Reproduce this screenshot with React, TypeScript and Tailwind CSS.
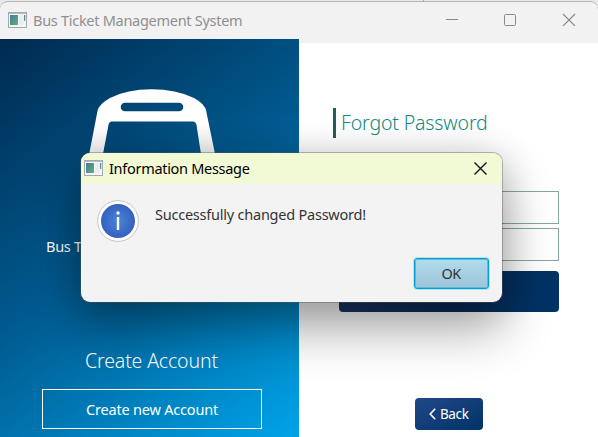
import React from "react";

function AppIcon() {
  return (
    <svg className="block h-[16px] w-[19px] shrink-0" viewBox="0 0 19 16">
      <defs>
        <linearGradient id="pane" x1="0" y1="0" x2="1" y2="1">
          <stop offset="0" stopColor="#4577a0" />
          <stop offset="1" stopColor="#5fb573" />
        </linearGradient>
      </defs>
      <rect x="0.5" y="0.5" width="18" height="15" fill="#f7f7f8" stroke="#a5a8b0" />
      <path d="M1 1.5H18" stroke="#b9bcc6" />
      <rect x="2" y="3" width="8" height="10" fill="url(#pane)" />
      <rect x="11" y="3" width="4.500" height="10" fill="#ececef" />
      <rect x="16" y="3" width="1.300" height="6" fill="url(#pane)" />
    </svg>
  );
}

function TitleBar() {
  return (
    <header className="relative flex h-[39px] shrink-0 bg-[#e9e9e9] pt-px">
      <span className="absolute left-[423px] top-0 h-[2px] w-px bg-[#d99a90]" />
      <div className="flex w-full items-start rounded-t-lg border-t border-[#b5b5b5] bg-[#f2f2f2] pl-2 pt-[10px]">
        <AppIcon />
        <span className="ml-[6px] -mt-[2px] text-[14.5px] leading-5 tracking-[-0.28px] text-[#8f8f8f]">
          Bus Ticket Management System
        </span>
        <svg className="ml-auto mr-[22px] block h-[14px] w-[131px]" viewBox="0 0 131 14" fill="none" stroke="#8a8a8a">
          <path d="M1 7.500H13" />
          <rect x="59.500" y="2.500" width="11" height="11" rx="1" />
          <path d="M118 2L130 14M130 2L118 14" strokeWidth="1.100" />
        </svg>
      </div>
    </header>
  );
}

function SidePanel() {
  return (
    <aside className="flex h-full w-[299px] shrink-0 flex-col items-center bg-[linear-gradient(143deg,#002a50_0%,#005b90_48%,#00a3e9_100%)] pt-[50px] text-white">
      <svg className="mr-[-4px] h-[120px] w-[150px] shrink-0" viewBox="0 0 150 120">
        <defs>
          <linearGradient id="bus" gradientUnits="userSpaceOnUse" x1="0" y1="35" x2="0" y2="66">
            <stop offset="0" stopColor="#fff" />
            <stop offset="1" stopColor="#f0f0f1" />
          </linearGradient>
        </defs>
        <path
          fill="url(#bus)"
          fillRule="evenodd"
          d="M9.700 78L20.500 22Q22 15 33 9Q50 0.300 74.500 0.300T117 9Q128 15 129.200 22L140.700 78ZM48 13.700A4.300 4.300 0 0 0 48 22.300H102A4.300 4.300 0 0 0 102 13.700ZM35 32.500Q32 32.500 31.500 36L23.500 78H126L119.500 36Q119 32.500 115.500 32.500Z"
        />
      </svg>
      <span className="mt-[27px] w-[207px] whitespace-nowrap text-[14.5px] leading-5 tracking-[-0.28px]">
        Bus Ticket Management System
      </span>
      <h2 className="ml-[4px] mt-[91px] whitespace-nowrap font-['Noto_Sans'] text-[19.5px] font-[350] leading-7 tracking-[-0.15px]">
        Create Account
      </h2>
      <button className="ml-[5px] mt-[14px] h-[40px] w-[220px] shrink-0 border border-white pt-[2px] text-[14.5px] tracking-[-0.2px]">
        Create new Account
      </button>
    </aside>
  );
}

function ForgotPassword() {
  return (
    <div className="h-full flex-1 bg-[#f2f2f2] pt-1">
      <main className="flex h-full flex-col bg-white pl-[34px] pt-[65px]">
        <h1 className="flex h-[30px] w-[200px] items-center whitespace-nowrap border-l-[3px] border-[#245f56] pl-[5px] font-['Noto_Sans'] text-[19.5px] font-[350] leading-7 tracking-[-0.15px] text-[#138b83]">
          Forgot Password
        </h1>
        <div className="ml-[6px] mt-[53px] flex w-[220px] flex-col">
          <div className="h-[33px] border border-[#83a9a1]" />
          <div className="mt-1 h-[33px] border border-[#83a9a1]" />
          <div className="mt-[10px] h-[41px] rounded bg-linear-to-r from-[#1a3565] via-[#092c59] to-[#003366]" />
        </div>
        <button className="ml-[82px] mt-[86px] flex h-8 w-[68px] items-center rounded bg-linear-to-br from-[#20488a] to-[#003366] pl-[14px] text-[13.5px] tracking-[-0.4px] text-white">
          <svg className="mr-[4px] h-3 w-[7px]" viewBox="0 0 7 12" fill="none" stroke="white" strokeWidth="1.600">
            <path d="M6.200 0.800L1.200 6L6.200 11.200" />
          </svg>
          Back
        </button>
      </main>
    </div>
  );
}

function InfoIcon() {
  return (
    <svg className="h-[42px] w-[42px] shrink-0" viewBox="0 0 42 42">
      <defs>
        <radialGradient id="info">
          <stop offset="0" stopColor="#4788d4" />
          <stop offset="1" stopColor="#365fc0" />
        </radialGradient>
      </defs>
      <circle cx="21" cy="21" r="20.400" fill="white" stroke="#c6c6c6" />
      <circle cx="21" cy="21" r="17" fill="url(#info)" />
      <circle cx="21" cy="13" r="1.700" fill="white" />
      <path d="M21 17V30" stroke="white" strokeWidth="2.400" />
    </svg>
  );
}

function MessageDialog() {
  return (
    <section className="absolute left-[81px] top-[153px] h-[149px] w-[421px] rounded-[9px] bg-[#f3f3f3] shadow-[0_0_0_1px_rgba(80,90,85,0.4),0_26px_50px_2px_rgba(0,0,0,0.33),0_2px_36px_0_rgba(0,0,0,0.16)]">
      <header className="flex h-[31px] items-start rounded-t-[9px] bg-[#f1f9d5] pl-[3px] pt-[7px]">
        <AppIcon />
        <span className="ml-[6px] -mt-[2px] text-[14.5px] leading-5 tracking-[-0.3px] text-black">Information Message</span>
        <svg className="ml-auto mr-[15px] mt-[2px] h-[13px] w-[13px]" viewBox="0 0 13 13" stroke="#111" strokeWidth="1.400">
          <path d="M0.500 0.500L12.500 12.500M12.500 0.500L0.500 12.500" />
        </svg>
      </header>
      <div className="flex pl-4 pt-4">
        <InfoIcon />
        <p className="ml-[16px] mt-[4px] text-[14.5px] leading-5 tracking-[-0.23px] text-[#333]">
          Successfully changed Password!
        </p>
      </div>
      <button className="ml-[333px] mt-[16px] block h-[31px] w-[75px] rounded-[3px] border border-[#039ed3] bg-linear-to-b from-[#b2dceb] to-[#9cc5da] pr-px text-[14.5px] tracking-[-0.6px] text-[#333] shadow-[0_0_0_1px_#b5e5f2,inset_0_0_0_1px_#63bad7]">
        OK
      </button>
    </section>
  );
}

export default function App() {
  return (
    <div className="relative flex h-[437px] w-[598px] flex-col overflow-hidden font-['Noto_Sans',sans-serif]">
      <TitleBar />
      <div className="flex min-h-0 flex-1">
        <SidePanel />
        <ForgotPassword />
      </div>
      <MessageDialog />
    </div>
  );
}
